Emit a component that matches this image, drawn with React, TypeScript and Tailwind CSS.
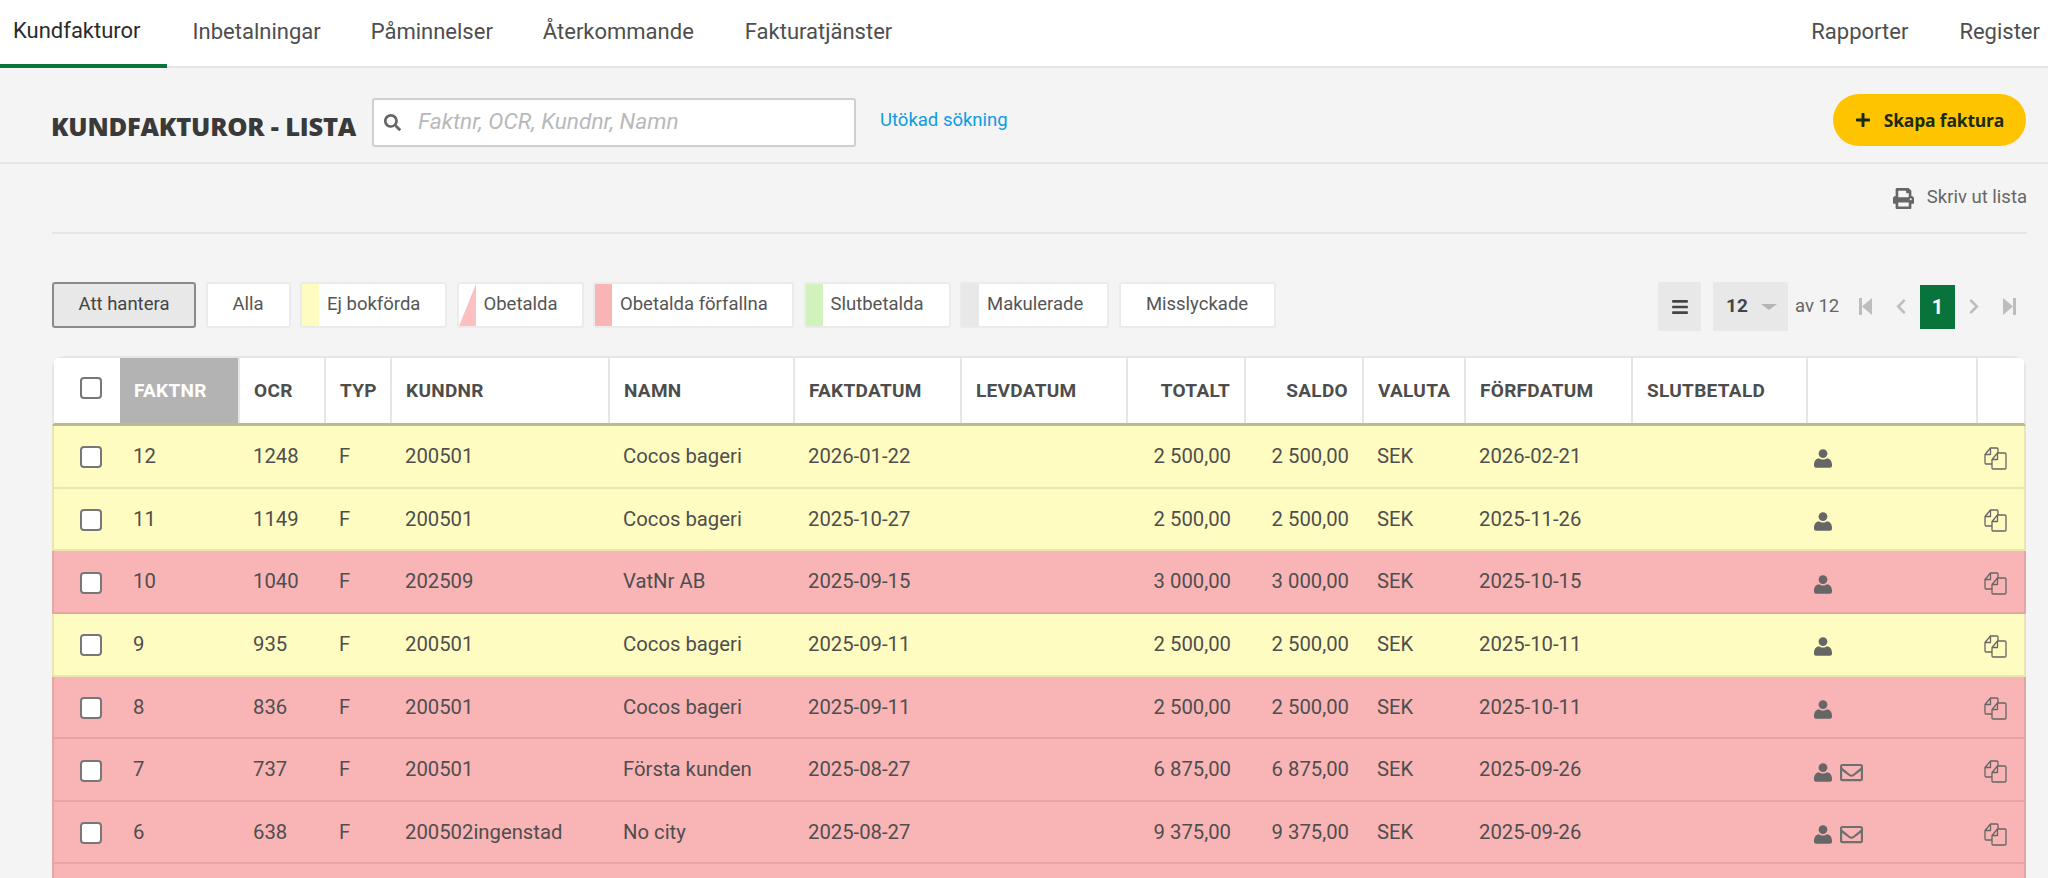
import React from 'react';
import {
  FaBars,
  FaChevronLeft,
  FaChevronRight,
  FaPlus,
  FaPrint,
  FaRegEnvelope,
  FaSearch,
} from 'react-icons/fa';

type Invoice = {
  nr: string;
  ocr: string;
  kundnr: string;
  namn: string;
  datum: string;
  belopp: string;
  forfdatum: string;
  tone: 'yellow' | 'red';
  mail?: boolean;
};

const invoices: Invoice[] = [
  { nr: '12', ocr: '1248', kundnr: '200501', namn: 'Cocos bageri', datum: '2026-01-22', belopp: '2 500,00', forfdatum: '2026-02-21', tone: 'yellow' },
  { nr: '11', ocr: '1149', kundnr: '200501', namn: 'Cocos bageri', datum: '2025-10-27', belopp: '2 500,00', forfdatum: '2025-11-26', tone: 'yellow' },
  { nr: '10', ocr: '1040', kundnr: '202509', namn: 'VatNr AB', datum: '2025-09-15', belopp: '3 000,00', forfdatum: '2025-10-15', tone: 'red' },
  { nr: '9', ocr: '935', kundnr: '200501', namn: 'Cocos bageri', datum: '2025-09-11', belopp: '2 500,00', forfdatum: '2025-10-11', tone: 'yellow' },
  { nr: '8', ocr: '836', kundnr: '200501', namn: 'Cocos bageri', datum: '2025-09-11', belopp: '2 500,00', forfdatum: '2025-10-11', tone: 'red' },
  { nr: '7', ocr: '737', kundnr: '200501', namn: 'Första kunden', datum: '2025-08-27', belopp: '6 875,00', forfdatum: '2025-09-26', tone: 'red', mail: true },
  { nr: '6', ocr: '638', kundnr: '200502ingenstad', namn: 'No city', datum: '2025-08-27', belopp: '9 375,00', forfdatum: '2025-09-26', tone: 'red', mail: true },
];

const gridCols =
  'grid grid-cols-[66px_120px_86px_66px_218px_185px_167px_166px_118px_118px_102px_167px_175px_170px_46px]';

const UserIcon = () => (
  <svg width="18" height="19" viewBox="0 0 18 19" fill="#666666">
    <circle cx="9" cy="4.6" r="4.4" />
    <path d="M0 15.500C0 11.500 2.600 9.400 5 9.200 6 10 7.400 10.500 9 10.500s3-.5 4-1.300c2.400.2 5 2.300 5 6.300v1.200c0 1.200-.9 2-2 2H2c-1.100 0-2-.8-2-2z" />
  </svg>
);

const CopyIcon = () => (
  <svg width="23" height="23" viewBox="0 0 23 23" fill="none" stroke="#666666" strokeWidth="1.3" strokeLinejoin="round">
    <path d="M8 17H2.200A1.200 1.200 0 0 1 1 15.800V7.500L6.500 1h6.300A1.200 1.200 0 0 1 14 2.200V6" />
    <path d="M1 7.500h5.500V1" />
    <path d="M9 22a1 1 0 0 1-1-1v-8.500L13.500 6h7.300A1.200 1.200 0 0 1 22 7.200V20.800A1.200 1.200 0 0 1 20.800 22z" />
    <path d="M8 12.500h5.500V6" />
  </svg>
);

const StepIcon = ({ flip, className }: { flip?: boolean; className: string }) => (
  <svg className={className} width="13" height="17" viewBox="0 0 13 17" fill="#bdbdbd">
    {flip ? (
      <>
        <rect x="10" y="0" width="3" height="17" />
        <polygon points="0,0 10,8.500 0,17" />
      </>
    ) : (
      <>
        <rect x="0" y="0" width="3" height="17" />
        <polygon points="13,0 3,8.500 13,17" />
      </>
    )}
  </svg>
);

const FilterButton = ({ label, bar, triangle, width }: { label: string; bar?: string; triangle?: boolean; width: string }) => (
  <button className={`flex h-[46px] items-center overflow-hidden rounded-[3px] border-2 border-[#ebebeb] bg-white text-[18.5px] text-[#555555] ${width}`}>
    {bar && <span className={`h-full w-[17px] shrink-0 ${bar}`} />}
    {triangle && (
      <svg className="h-full w-[17px] shrink-0" viewBox="0 0 17 42" preserveAspectRatio="none">
        <polygon points="17,0 17,42 0,42" fill="#fcc0c2" />
      </svg>
    )}
    <span className={bar || triangle ? 'pl-[8px]' : 'flex-1 text-center'}>{label}</span>
  </button>
);

const Th = ({ children, right, active }: { children?: React.ReactNode; right?: boolean; active?: boolean }) => (
  <div
    className={`flex items-center border-r-2 border-[#e6e6e6] px-[14px] pt-[1px] text-[19px] font-bold tracking-[0.3px] ${right ? 'justify-end' : ''} ${
      active ? 'bg-[#b3b3b3] text-white' : 'text-[#4d4d4d]'
    }`}
  >
    {children}
  </div>
);

const Checkbox = () => <span className="block h-[22px] w-[22px] rounded-[4px] border-2 border-[#777777] bg-white" />;

const Row = ({ invoice }: { invoice: Invoice }) => {
  const tone =
    invoice.tone === 'yellow' ? 'bg-[#fffcc1] border-[#e9e6b2]' : 'bg-[#f9b4b6] border-[#e5a4a6]';
  const cell = 'flex items-center pl-[13px]';
  return (
    <div className={`${gridCols} h-[62.65px] border-x-2 border-b-2 text-[20.3px] text-[#4e4e4e] ${tone}`}>
      <div className="flex items-center justify-center pl-[8px] pt-[2px]">
        <Checkbox />
      </div>
      <div className={cell}>{invoice.nr}</div>
      <div className={cell}>{invoice.ocr}</div>
      <div className={cell}>F</div>
      <div className={cell}>{invoice.kundnr}</div>
      <div className={cell}>{invoice.namn}</div>
      <div className={cell}>{invoice.datum}</div>
      <div className={cell} />
      <div className="flex items-center justify-end pr-[15px]">{invoice.belopp}</div>
      <div className="flex items-center justify-end pr-[15px]">{invoice.belopp}</div>
      <div className={cell}>SEK</div>
      <div className={cell}>{invoice.forfdatum}</div>
      <div className={cell} />
      <div className="flex items-center gap-[8px] pl-[6px] pt-[5px]">
        <UserIcon />
        {invoice.mail && <FaRegEnvelope className="text-[23px] text-[#6f6f6f]" />}
      </div>
      <div className="flex items-center pl-[6px] pt-[4px]">
        <CopyIcon />
      </div>
    </div>
  );
};

const App: React.FC = () => {
  return (
    <div className="h-screen overflow-hidden bg-[#f4f4f4] font-['Roboto',sans-serif]">
      <nav className="flex h-[68px] border-b-2 border-[#e6e6e6] bg-white text-[22px] text-[#4e4e4e]">
        <a className="-mb-[2px] flex h-[68px] items-center border-b-[4px] border-[#08733a] pb-[4px] pl-[13px] pr-[26px] text-[#2b2b2b]">Kundfakturor</a>
        <a className="ml-[26px] flex items-center pb-[4px]">Inbetalningar</a>
        <a className="ml-[50px] flex items-center pb-[4px]">Påminnelser</a>
        <a className="ml-[50px] flex items-center pb-[4px]">Återkommande</a>
        <a className="ml-[51px] flex items-center pb-[4px]">Fakturatjänster</a>
        <a className="ml-auto flex items-center pb-[4px]">Rapporter</a>
        <a className="ml-[51px] mr-[8px] flex items-center pb-[4px]">Register</a>
      </nav>

      <header className="flex h-[96px] items-start border-b-2 border-[#e6e6e6] pl-[51px] pr-[22px]">
        <h1 className="mt-[41px] w-[321px] shrink-0 font-['Open_Sans',sans-serif] text-[25.5px] font-extrabold leading-[34px] tracking-[-0.2px] text-[#3a3a3a]">KUNDFAKTUROR - LISTA</h1>
        <div className="mt-[30px] flex h-[49px] w-[484px] items-center rounded-[3px] border-2 border-[#cfcfcf] bg-white pl-[10px]">
          <FaSearch className="text-[17px] text-[#666666]" />
          <span className="ml-[17px] text-[22.7px] italic text-[#b9b9b9]">Faktnr, OCR, Kundnr, Namn</span>
        </div>
        <a className="ml-[24px] mt-[40px] text-[18.5px] leading-[25px] text-[#0f9be3]">Utökad sökning</a>
        <button className="ml-auto mt-[26px] flex h-[52px] w-[193px] items-center justify-center gap-[13px] rounded-full bg-[#ffc400] font-['Open_Sans',sans-serif] text-[17.5px] font-bold tracking-[-0.2px] text-[#1b2a10]">
          <FaPlus className="text-[16px]" />
          Skapa faktura
        </button>
      </header>

      <div className="ml-[52px] mr-[21px] flex h-[70px] items-center justify-end gap-[13px] border-b-2 border-[#e6e6e6] text-[18.5px] text-[#666666]">
        <FaPrint className="text-[21px]" />
        Skriv ut lista
      </div>

      <div className="ml-[52px] mr-[21px] mt-[48px] flex h-[49px] items-start text-[#555555]">
        <div className="flex gap-[9.5px]">
          <button className="h-[46px] w-[144px] rounded-[3px] border-2 border-[#8a8a8a] bg-[#e8e8e8] text-[18.5px] text-[#444444]">Att hantera</button>
          <FilterButton label="Alla" width="w-[85px]" />
          <FilterButton label="Ej bokförda" bar="bg-[#fffcc1]" width="w-[147px]" />
          <FilterButton label="Obetalda" triangle width="w-[127px]" />
          <FilterButton label="Obetalda förfallna" bar="bg-[#f9b4b6]" width="w-[201px]" />
          <FilterButton label="Slutbetalda" bar="bg-[#d2f2bb]" width="w-[147px]" />
          <FilterButton label="Makulerade" bar="bg-[#e8e8e8]" width="w-[149px]" />
          <FilterButton label="Misslyckade" width="w-[157px]" />
        </div>
        <div className="ml-auto flex h-[49px] items-center">
          <span className="flex h-[49px] w-[43px] items-center justify-center rounded-[2px] bg-[#e8e8e8] text-[18px] text-[#444444]">
            <FaBars />
          </span>
          <span className="ml-[12px] flex h-[49px] w-[75px] items-center rounded-[2px] bg-[#e8e8e8] pl-[13px] text-[19px] font-bold text-[#444444]">
            12
            <span className="ml-[13px] h-0 w-0 border-x-[8px] border-t-[6px] border-x-transparent border-t-[#b5b5b5]" />
          </span>
          <span className="ml-[7px] w-[44px] whitespace-nowrap text-[18.5px] text-[#666666]">av 12</span>
          <StepIcon className="ml-[20px]" />
          <FaChevronLeft className="ml-[23px] h-[17px] w-[12px] text-[#bdbdbd]" />
          <span className="ml-[13px] flex h-[44px] w-[35px] items-center justify-center bg-[#08733a] text-[20px] font-bold text-white">1</span>
          <FaChevronRight className="ml-[13px] h-[17px] w-[12px] text-[#bdbdbd]" />
          <StepIcon flip className="ml-[23px] mr-[11px]" />
        </div>
      </div>

      <div className="ml-[52px] mr-[22px] mt-[25px] overflow-hidden rounded-t-[12px]">
        <div className={`${gridCols} h-[70px] border-x-2 border-t-2 border-b-[3px] border-x-[#e6e6e6] border-t-[#e6e6e6] border-b-[#bcbb8a] bg-white`}>
          <div className="flex items-center justify-center pb-[6px] pl-[8px]">
            <Checkbox />
          </div>
          <Th active>FAKTNR</Th>
          <Th>OCR</Th>
          <Th>TYP</Th>
          <Th>KUNDNR</Th>
          <Th>NAMN</Th>
          <Th>FAKTDATUM</Th>
          <Th>LEVDATUM</Th>
          <Th right>TOTALT</Th>
          <Th right>SALDO</Th>
          <Th>VALUTA</Th>
          <Th>FÖRFDATUM</Th>
          <Th>SLUTBETALD</Th>
          <Th />
          <div />
        </div>
        {invoices.map(invoice => (
          <Row key={invoice.nr} invoice={invoice} />
        ))}
        <div className="h-[62.65px] border-x-2 border-[#e5a4a6] bg-[#f9b4b6]" />
      </div>
    </div>
  );
};

export default App;
